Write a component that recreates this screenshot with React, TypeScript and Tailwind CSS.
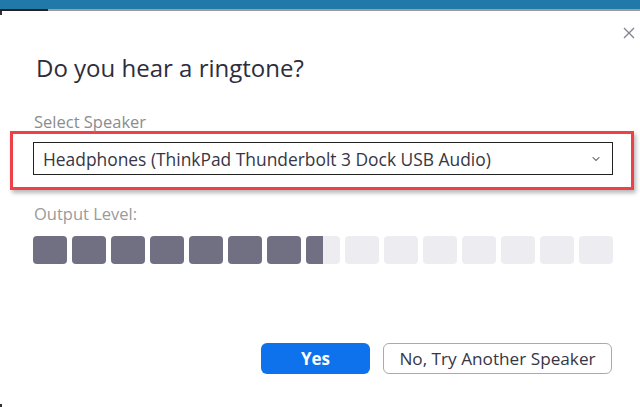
import { ChevronDown } from 'lucide-react';

const LEVEL_BARS = 15;
const LEVEL = 7.5; // bars lit, the last one only half

function LevelMeter({ level }: { level: number }) {
  return (
    <div className="flex gap-[5px]">
      {Array.from({ length: LEVEL_BARS }).map((_, i) => {
        const fill = Math.max(0, Math.min(1, level - i));
        return (
          <div key={i} className="relative h-[28px] w-[34px] overflow-hidden rounded-[4px] bg-[#ededf1]">
            {fill > 0 && (
              <div className="h-full bg-[#717082]" style={{ width: `${fill * 100}%` }} />
            )}
          </div>
        );
      })}
    </div>
  );
}

export default function App() {
  return (
    <div className="relative h-[407px] w-[640px] overflow-hidden bg-white font-['Open_Sans','Noto_Sans',sans-serif]">
      {/* ── Window chrome ───────────────────────────────────────────── */}
      <div className="h-[9px] bg-[#2079a9]" />
      <div className="flex h-[2px]">
        <div className="w-[48px] bg-[#222]" />
        <div className="flex-1 bg-[#9c9c9c]" />
      </div>

      <div className="relative">
        <div className="absolute left-0 top-0 h-[4px] w-[2px] bg-[#333]" />

        {/* close */}
        <button className="absolute right-[4px] top-[15px] p-[1px] text-[#80808f]">
          <svg width="12" height="12" viewBox="0 0 12 12" fill="none" stroke="currentColor" strokeWidth="1.3">
            <path d="M1 1l10 10M11 1L1 11" />
          </svg>
        </button>

        {/* ── Title ─────────────────────────────────────────────────── */}
        <h1 className="ml-[36px] pt-[41px] text-[24px] leading-[32px] text-[#2d2d3d]">
          Do you hear a ringtone?
        </h1>

        {/* ── Speaker select ────────────────────────────────────────── */}
        <p className="ml-[34px] mt-[27px] text-[16.5px] leading-[22px] text-[#8c8c8c]">Select Speaker</p>

        <div className="ml-[10px] mt-[-2px] h-[59px] w-[624px] border-[3px] border-[#ee4047] pl-[20px] pt-[8px] shadow-[2px_3px_4px_rgba(0,0,0,0.28)]">
          <div className="flex h-[33px] w-[580px] items-center justify-between border border-[#222] bg-white pl-[9px] pr-[10px]">
            <span className="text-[17.4px] leading-[22px] text-[#363645]">
              Headphones (ThinkPad Thunderbolt 3 Dock USB Audio)
            </span>
            <ChevronDown className="h-[12px] w-[12px] text-[#7a7a8c]" strokeWidth={2.2} />
          </div>
        </div>

        {/* ── Output level ──────────────────────────────────────────── */}
        <p className="ml-[34px] mt-[13px] text-[16.5px] leading-[22px] text-[#9a9a9a]">Output Level:</p>
        <div className="ml-[33px] mt-[11px]">
          <LevelMeter level={LEVEL} />
        </div>

        {/* ── Actions ───────────────────────────────────────────────── */}
        <div className="mt-[79px] flex justify-end gap-[13px] pr-[28px]">
          <button className="h-[31px] w-[109px] rounded-[6px] bg-[#0e72ed] text-[17px] font-bold text-white">
            Yes
          </button>
          <button className="h-[31px] w-[229px] rounded-[6px] border border-[#a9a9b0] bg-white text-[17.2px] text-[#363645]">
            No, Try Another Speaker
          </button>
        </div>
      </div>

      {/* window corner peeking at bottom left */}
      <div className="absolute bottom-0 left-0 h-[3px] w-[2px] bg-[#333]" />
    </div>
  );
}
